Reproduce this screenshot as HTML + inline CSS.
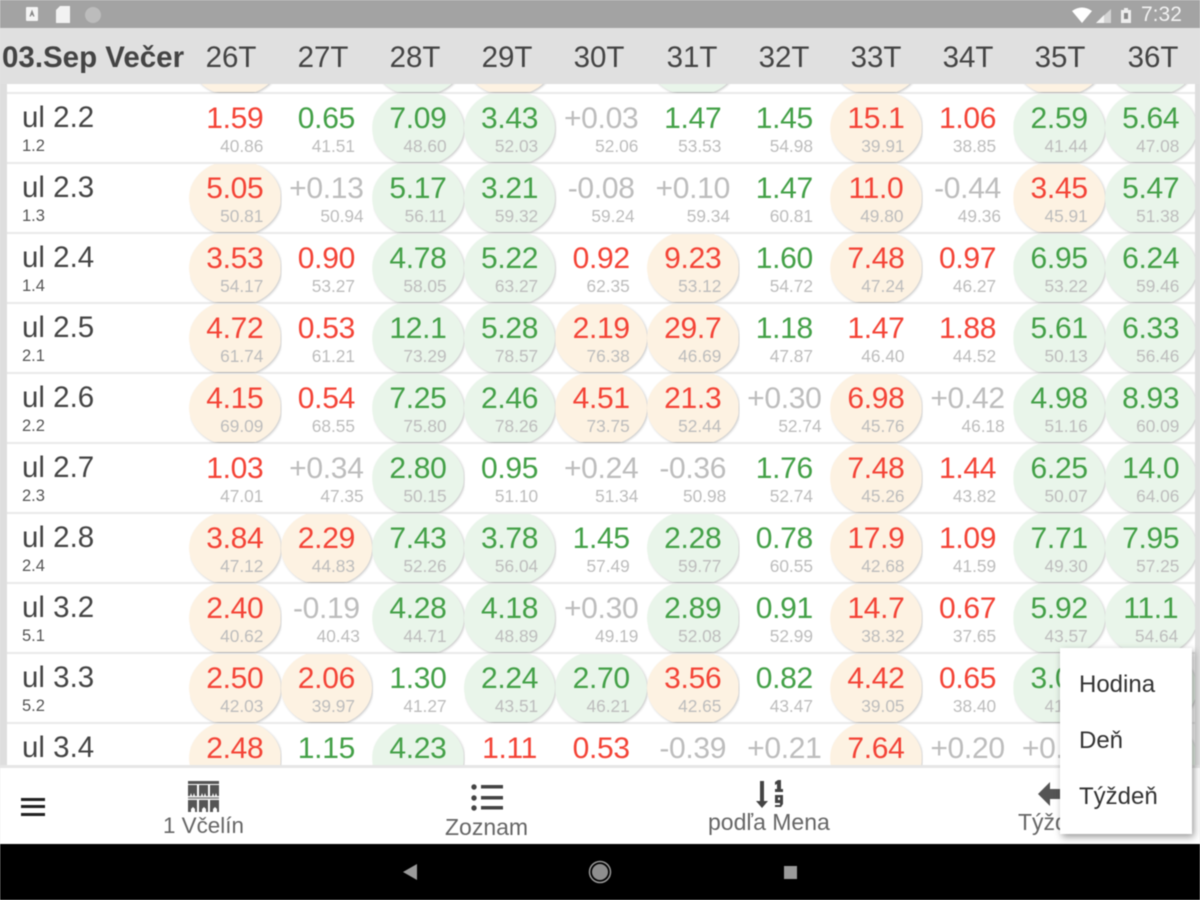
<!DOCTYPE html>
<html><head><meta charset="utf-8"><title>Včelín</title>
<style>
*{margin:0;padding:0;box-sizing:border-box}
html,body{width:1200px;height:900px;overflow:hidden;background:#e6e6e6;font-family:"Liberation Sans",sans-serif}
#wrap{position:relative;width:1200px;height:900px;overflow:hidden;filter:blur(.5px)}
#st{position:absolute;left:0;top:0;width:1200px;height:28px;background:#a3a3a3}
#time{position:absolute;left:1141px;top:3px;font-size:21px;line-height:24px;color:#f2f2f2}
#hd{position:absolute;left:0;top:28px;width:1200px;height:56px;background:#e0e0e0;color:#444;font-size:29.5px;line-height:59.5px}
#hd span{position:absolute;top:0;width:80px;margin-left:-40px;text-align:center}
#hd b{position:absolute;left:2px;top:0;white-space:nowrap}
#list{position:absolute;z-index:1;left:0;top:84px;width:1200px;height:681px;overflow:hidden;background:#e9e9e9}
#list:before{content:"";position:absolute;left:0;top:0;width:7px;height:681px;background:#dedede}
#list:after{content:"";position:absolute;right:0;top:0;width:5px;height:681px;background:#dedede}
.r{position:absolute;left:7px;width:1188px;height:68px;background:#fff;display:flex;padding-left:182px}
.n{position:absolute;left:15px;top:7px;font-size:29.5px;line-height:34px;color:#444;white-space:nowrap;font-weight:300}
.n small{display:block;font-size:16.5px;line-height:20px;margin-top:1px;color:#555}
.r a{position:relative;flex:none;display:grid;justify-content:center;align-content:start;width:91.6px;height:68px;padding-top:7.5px}
.r b{position:relative;z-index:1;font-weight:400;font-size:30px;letter-spacing:-.3px;line-height:34px;white-space:nowrap}
.r em{position:relative;z-index:1;font-style:normal;font-size:17.3px;line-height:20px;margin-top:.5px;color:#bdbdbd;justify-self:end;white-space:nowrap}
.O:before,.G:before,.O:after,.G:after{content:"";position:absolute;left:0;top:-4px;width:100%;height:76px;border-radius:50%;clip-path:inset(4px 0)}
.O:before,.G:before{background:rgba(0,0,0,.22);transform:translate(1px,1px);filter:blur(1px)}
.O:after{background:#fdf2e2}
.G:after{background:#e9f5ea}
.O b,.d b{color:#f44336}
.G b,.u b{color:#43a047}
.x b{color:#bdbdbd}
#tb{position:absolute;z-index:2;left:0;top:768px;width:1200px;height:76px;background:#fff;color:#666}
#tb span{position:absolute;white-space:nowrap;line-height:26px}
#tb svg{position:absolute;left:0;top:0}
#nav{position:absolute;z-index:2;left:0;top:844px;width:1200px;height:56px;background:#000}
#menu{position:absolute;z-index:5;left:1060px;top:648px;width:132px;height:186px;background:#fff;box-shadow:2px 3px 7px rgba(0,0,0,.4);color:#333;font-size:24px}
#menu div{position:absolute;left:19px;line-height:28px}
</style></head><body><div id="wrap">

<div id="st">
<svg width="1200" height="28" style="position:absolute;left:0;top:0">
<rect x="26" y="7" width="12" height="14" rx="1" fill="#f4f4f4"/>
<path d="M32 9.500l-2.600 7h1.500l.5-1.500h1.200l.5 1.500h1.500z" fill="#888"/>
<path d="M60 6h10v17H56V10z" fill="#f2f2f2"/>
<circle cx="93" cy="15" r="8" fill="#bcbcbc"/>
<path d="M1072 11q10-7 20 0l-10 12z" fill="#fff"/>
<path d="M1111 9v14h-15z" fill="#d4d4d4"/>
<path d="M1104 15v8h-8z" fill="#f4f4f4"/>
<path d="M1124 8h4v2h3v13h-10V10h3z" fill="#ededed"/>
<rect x="1124" y="13" width="4" height="6" fill="#888"/>
</svg>
<div id="time">7:32</div>
</div>

<div id="hd"><b>03.Sep Večer</b>
<span style="left:231px">26T</span><span style="left:323px">27T</span><span style="left:415px">28T</span><span style="left:507px">29T</span><span style="left:599px">30T</span><span style="left:692px">31T</span><span style="left:784px">32T</span><span style="left:876px">33T</span><span style="left:968px">34T</span><span style="left:1060px">35T</span><span style="left:1153px">36T</span>
</div>

<div id="list">
<div class="r" style="top:-60px"><a class="O"></a><a></a><a class="G"></a><a class="O"></a><a></a><a class="G"></a><a></a><a class="O"></a><a></a><a class="O"></a><a class="G"></a></div>

<div class="r" style="top:10px"><div class="n">ul 2.2<small>1.2</small></div>
<a class="d"><b>1.59</b><em>40.86</em></a><a class="u"><b>0.65</b><em>41.51</em></a><a class="G"><b>7.09</b><em>48.60</em></a><a class="G"><b>3.43</b><em>52.03</em></a><a class="x"><b>+0.03</b><em>52.06</em></a><a class="u"><b>1.47</b><em>53.53</em></a><a class="u"><b>1.45</b><em>54.98</em></a><a class="O"><b>15.1</b><em>39.91</em></a><a class="d"><b>1.06</b><em>38.85</em></a><a class="G"><b>2.59</b><em>41.44</em></a><a class="G"><b>5.64</b><em>47.08</em></a></div>

<div class="r" style="top:80px"><div class="n">ul 2.3<small>1.3</small></div>
<a class="O"><b>5.05</b><em>50.81</em></a><a class="x"><b>+0.13</b><em>50.94</em></a><a class="G"><b>5.17</b><em>56.11</em></a><a class="G"><b>3.21</b><em>59.32</em></a><a class="x"><b>-0.08</b><em>59.24</em></a><a class="x"><b>+0.10</b><em>59.34</em></a><a class="u"><b>1.47</b><em>60.81</em></a><a class="O"><b>11.0</b><em>49.80</em></a><a class="x"><b>-0.44</b><em>49.36</em></a><a class="O"><b>3.45</b><em>45.91</em></a><a class="G"><b>5.47</b><em>51.38</em></a></div>

<div class="r" style="top:150px"><div class="n">ul 2.4<small>1.4</small></div>
<a class="O"><b>3.53</b><em>54.17</em></a><a class="d"><b>0.90</b><em>53.27</em></a><a class="G"><b>4.78</b><em>58.05</em></a><a class="G"><b>5.22</b><em>63.27</em></a><a class="d"><b>0.92</b><em>62.35</em></a><a class="O"><b>9.23</b><em>53.12</em></a><a class="u"><b>1.60</b><em>54.72</em></a><a class="O"><b>7.48</b><em>47.24</em></a><a class="d"><b>0.97</b><em>46.27</em></a><a class="G"><b>6.95</b><em>53.22</em></a><a class="G"><b>6.24</b><em>59.46</em></a></div>

<div class="r" style="top:220px"><div class="n">ul 2.5<small>2.1</small></div>
<a class="O"><b>4.72</b><em>61.74</em></a><a class="d"><b>0.53</b><em>61.21</em></a><a class="G"><b>12.1</b><em>73.29</em></a><a class="G"><b>5.28</b><em>78.57</em></a><a class="O"><b>2.19</b><em>76.38</em></a><a class="O"><b>29.7</b><em>46.69</em></a><a class="u"><b>1.18</b><em>47.87</em></a><a class="d"><b>1.47</b><em>46.40</em></a><a class="d"><b>1.88</b><em>44.52</em></a><a class="G"><b>5.61</b><em>50.13</em></a><a class="G"><b>6.33</b><em>56.46</em></a></div>

<div class="r" style="top:290px"><div class="n">ul 2.6<small>2.2</small></div>
<a class="O"><b>4.15</b><em>69.09</em></a><a class="d"><b>0.54</b><em>68.55</em></a><a class="G"><b>7.25</b><em>75.80</em></a><a class="G"><b>2.46</b><em>78.26</em></a><a class="O"><b>4.51</b><em>73.75</em></a><a class="O"><b>21.3</b><em>52.44</em></a><a class="x"><b>+0.30</b><em>52.74</em></a><a class="O"><b>6.98</b><em>45.76</em></a><a class="x"><b>+0.42</b><em>46.18</em></a><a class="G"><b>4.98</b><em>51.16</em></a><a class="G"><b>8.93</b><em>60.09</em></a></div>

<div class="r" style="top:360px"><div class="n">ul 2.7<small>2.3</small></div>
<a class="d"><b>1.03</b><em>47.01</em></a><a class="x"><b>+0.34</b><em>47.35</em></a><a class="G"><b>2.80</b><em>50.15</em></a><a class="u"><b>0.95</b><em>51.10</em></a><a class="x"><b>+0.24</b><em>51.34</em></a><a class="x"><b>-0.36</b><em>50.98</em></a><a class="u"><b>1.76</b><em>52.74</em></a><a class="O"><b>7.48</b><em>45.26</em></a><a class="d"><b>1.44</b><em>43.82</em></a><a class="G"><b>6.25</b><em>50.07</em></a><a class="G"><b>14.0</b><em>64.06</em></a></div>

<div class="r" style="top:430px"><div class="n">ul 2.8<small>2.4</small></div>
<a class="O"><b>3.84</b><em>47.12</em></a><a class="O"><b>2.29</b><em>44.83</em></a><a class="G"><b>7.43</b><em>52.26</em></a><a class="G"><b>3.78</b><em>56.04</em></a><a class="u"><b>1.45</b><em>57.49</em></a><a class="G"><b>2.28</b><em>59.77</em></a><a class="u"><b>0.78</b><em>60.55</em></a><a class="O"><b>17.9</b><em>42.68</em></a><a class="d"><b>1.09</b><em>41.59</em></a><a class="G"><b>7.71</b><em>49.30</em></a><a class="G"><b>7.95</b><em>57.25</em></a></div>

<div class="r" style="top:500px"><div class="n">ul 3.2<small>5.1</small></div>
<a class="O"><b>2.40</b><em>40.62</em></a><a class="x"><b>-0.19</b><em>40.43</em></a><a class="G"><b>4.28</b><em>44.71</em></a><a class="G"><b>4.18</b><em>48.89</em></a><a class="x"><b>+0.30</b><em>49.19</em></a><a class="G"><b>2.89</b><em>52.08</em></a><a class="u"><b>0.91</b><em>52.99</em></a><a class="O"><b>14.7</b><em>38.32</em></a><a class="d"><b>0.67</b><em>37.65</em></a><a class="G"><b>5.92</b><em>43.57</em></a><a class="G"><b>11.1</b><em>54.64</em></a></div>

<div class="r" style="top:570px"><div class="n">ul 3.3<small>5.2</small></div>
<a class="O"><b>2.50</b><em>42.03</em></a><a class="O"><b>2.06</b><em>39.97</em></a><a class="u"><b>1.30</b><em>41.27</em></a><a class="G"><b>2.24</b><em>43.51</em></a><a class="G"><b>2.70</b><em>46.21</em></a><a class="O"><b>3.56</b><em>42.65</em></a><a class="u"><b>0.82</b><em>43.47</em></a><a class="O"><b>4.42</b><em>39.05</em></a><a class="d"><b>0.65</b><em>38.40</em></a><a class="G"><b>3.05</b><em>41.45</em></a><a class="G"><b>4.10</b><em>45.55</em></a></div>

<div class="r" style="top:640px"><div class="n">ul 3.4<small>5.3</small></div>
<a class="O"><b>2.48</b></a><a class="u"><b>1.15</b></a><a class="G"><b>4.23</b></a><a class="d"><b>1.11</b></a><a class="d"><b>0.53</b></a><a class="x"><b>-0.39</b></a><a class="x"><b>+0.21</b></a><a class="O"><b>7.64</b></a><a class="x"><b>+0.20</b></a><a class="x"><b>+0.10</b></a><a class="G"><b>4.10</b></a></div>
</div>

<div id="tb">
<svg width="1200" height="76">
<g fill="#222"><rect x="21" y="30" width="24" height="3"/><rect x="21" y="37" width="24" height="3"/><rect x="21" y="45" width="24" height="3"/></g>
<g fill="#555">
<rect x="188" y="13" width="31" height="3"/>
<path d="M188 17h9v11h-2l-1-3-1 3h-1l-1-3-1 3h-2zM199 17h9v11h-2l-1-3-1 3h-1l-1-3-1 3h-2zM210 17h9v11h-2l-1-3-1 3h-1l-1-3-1 3h-2z"/>
<rect x="188" y="29" width="31" height="2" fill="#999"/>
<path d="M188 32h9v12h-2v-3l-2-2-2 2v3h-3zM199 32h9v12h-2v-3l-2-2-2 2v3h-3zM210 32h9v12h-2v-3l-2-2-2 2v3h-3z"/>
</g>
<g fill="#444">
<circle cx="474" cy="19" r="2.700"/><circle cx="474" cy="30" r="2.700"/><circle cx="474" cy="40" r="2.700"/>
<rect x="481" y="17" width="22" height="3.500"/><rect x="481" y="28" width="22" height="3.500"/><rect x="481" y="38" width="22" height="3.500"/>
</g>
<path d="M760 13h4v20h4l-6 7-6-7h4z" fill="#444"/>
<path d="M775 14l3-2h3v9h2v3h-8v-3h2v-5l-2 1zM775 27h8v9l-2 3h-6v-2h5v-2h-5zM778 29.500v2.500h2v-2.500z" fill="#444" fill-rule="evenodd"/>
<path d="M1038 26l12-12v7h10v10h-10v7z" fill="#555"/>
</svg>
<span style="left:163px;top:45px;font-size:22.400px">1 Včelín</span>
<span style="left:445px;top:46px;font-size:23px">Zoznam</span>
<span style="left:708px;top:41px;font-size:23px">podľa Mena</span>
<span style="left:1018px;top:41px;font-size:23px">Týždeň</span>
</div>

<div id="nav">
<svg width="1200" height="56">
<path d="M417 20v16l-14-8z" fill="#9a9a9a"/>
<circle cx="600" cy="28" r="10.500" fill="none" stroke="#9a9a9a" stroke-width="1.500"/>
<circle cx="600" cy="28" r="8" fill="#8e8e8e"/>
<rect x="784" y="22" width="13" height="13" fill="#9a9a9a"/>
</svg>
</div>

<div id="menu">
<div style="top:23px">Hodina</div>
<div style="top:79px">Deň</div>
<div style="top:135px">Týždeň</div>
</div>

</div></body></html>
